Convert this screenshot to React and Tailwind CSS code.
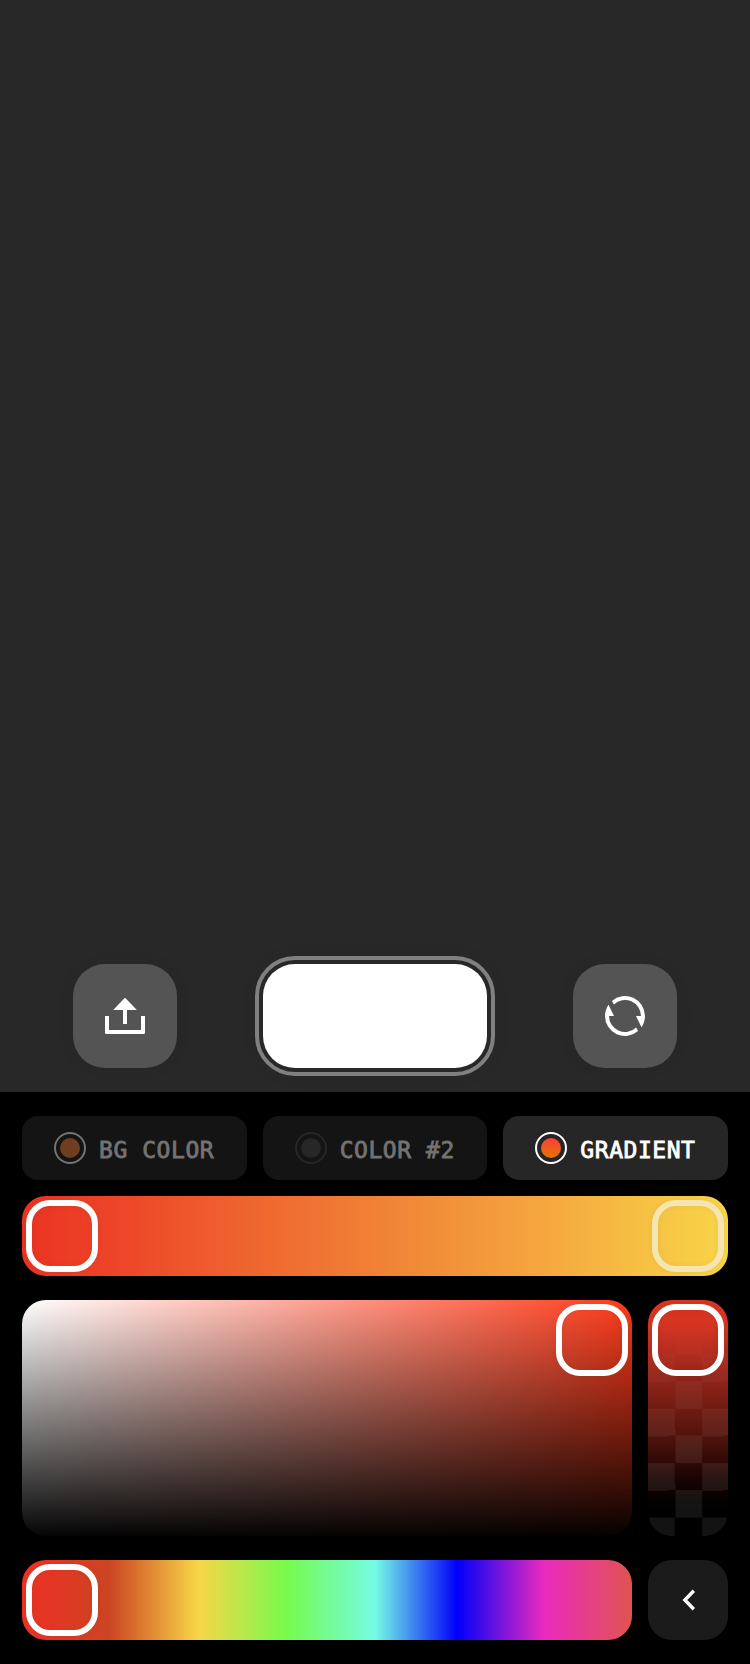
function ExportIcon() {
  return (
    <svg className="size-10" viewBox="0 0 40 40" fill="#fff">
      <path d="M19.4 2.3Q20 1.7 20.6 2.3L31.8 14H22V28H18V14H8.2Z" />
      <path d="M0 20H4V34H36V20H40V36.8Q40 38 38.8 38H1.2Q0 38 0 36.8Z" />
    </svg>
  );
}

function SyncIcon() {
  return (
    <svg className="size-10" viewBox="0 0 40 40" fill="#fff">
      <g id="half">
        <path d="M6.9 4.9A20 20 0 0 1 40 20Q40 26 36.5 31.3L31 20H36A16 16 0 0 0 8.9 8.5Z" />
      </g>
      <use href="#half" transform="rotate(180 20 20)" />
    </svg>
  );
}

function RoundButton({ children, label }) {
  return (
    <button
      aria-label={label}
      className="flex size-[104px] items-center justify-center rounded-[32px] bg-[#545454] shadow-[0_0_20px_rgba(0,0,0,0.04)]"
    >
      {children}
    </button>
  );
}

function Tab({ label, tabClass, ringClass, dotClass }) {
  return (
    <button className={`flex h-16 flex-1 items-center gap-[13px] rounded-2xl pl-8 ${tabClass}`}>
      <span className={`flex size-8 items-center justify-center rounded-full border-2 ${ringClass}`}>
        <span className={`size-5 rounded-full ${dotClass}`} />
      </span>
      <span className="pt-1 text-[23px] leading-8 tracking-[0.55px] whitespace-pre [-webkit-text-stroke:0.8px_currentColor]">
        {label}
      </span>
    </button>
  );
}

function Thumb({ className = "border-white" }) {
  return (
    <div
      className={`size-[72px] rounded-[24px] border-6 shadow-[0_0_6px_rgba(0,0,0,0.06),inset_0_0_6px_rgba(0,0,0,0.06)] ${className}`}
    />
  );
}

export default function App() {
  return (
    <div className="flex h-[1664px] w-[750px] flex-col bg-black font-['DejaVu_Sans_Mono',monospace]">
      <div className="flex h-[1092px] items-end justify-between bg-[#282828] px-[73px] pb-4">
        <div className="pb-2">
          <RoundButton label="Export">
            <ExportIcon />
          </RoundButton>
        </div>
        <button
          aria-label="Capture"
          className="h-[120px] w-[240px] rounded-[40px] border-4 border-[#808080] p-1 shadow-[0_0_20px_rgba(0,0,0,0.04)]"
        >
          <span className="block size-full rounded-[32px] bg-white" />
        </button>
        <div className="pb-2">
          <RoundButton label="Switch">
            <SyncIcon />
          </RoundButton>
        </div>
      </div>

      <div className="flex flex-col px-[22px] pt-6">
        <div className="flex gap-4">
          <Tab label="BG COLOR" tabClass="bg-[#141414] text-[#737373]" ringClass="border-[#737373]" dotClass="bg-[#6f3d1f]" />
          <Tab label="COLOR #2" tabClass="bg-[#141414] text-[#737373]" ringClass="border-[#272727]" dotClass="bg-[#272727]" />
          <Tab
            label="GRADIENT"
            tabClass="bg-[#262626] text-white"
            ringClass="border-white"
            dotClass="bg-[linear-gradient(180deg,#ff3d3d,#de7700)]"
          />
        </div>

        <div className="mt-4 flex h-20 justify-between rounded-[24px] bg-[linear-gradient(90deg,#ea3323_0%,#ed4628_14%,#ef6b30_36%,#f18a38_56%,#f5a73f_74%,#f8d648_100%)] p-1">
          <Thumb />
          <Thumb className="border-[#f5e5b0]" />
        </div>

        <div className="mt-6 flex gap-4">
          <div className="flex h-[236px] flex-1 justify-end rounded-[24px] bg-[linear-gradient(180deg,transparent,rgba(0,0,0,0.98)),linear-gradient(90deg,#fff,#ff3b1a)] p-1">
            <Thumb />
          </div>
          <div className="relative h-[236px] w-20 overflow-hidden rounded-[24px] bg-[linear-gradient(180deg,#d93522_0%,#d63522_10%,#b42d1f_22%,#8c2318_35%,#6c1a10_48%,#4c120b_59%,#2c0805_70%,#180402_76%,#080100_83%,#000_90%)]">
            <div className="absolute inset-0 bg-[repeating-conic-gradient(transparent_0_25%,rgba(255,255,255,0.075)_0_50%)] mask-[linear-gradient(180deg,transparent_10%,#000_65%)] bg-size-[54.2px_54.4px]" />
            <div className="relative p-1">
              <Thumb />
            </div>
          </div>
        </div>

        <div className="mt-6 flex gap-4">
          <div className="flex h-20 flex-1 rounded-[24px] bg-[linear-gradient(90deg,#ea3323_0%,#e43625_5%,#cb4522_14.4%,#f8d648_28.9%,#76fb4c_43.4%,#75fbe6_57.9%,#0000fa_71.3%,#ea2abd_85.6%,#e0544f_100%)] p-1">
            <Thumb />
          </div>
          <button aria-label="Back" className="flex size-20 items-center justify-center rounded-[24px] bg-[#1b1b1b]">
            <svg className="size-6" viewBox="0 0 24 24" fill="none" stroke="#fff" strokeWidth="3.4">
              <path d="M17.8 2.8 8.9 12l8.9 9.2" />
            </svg>
          </button>
        </div>
      </div>
    </div>
  );
}
